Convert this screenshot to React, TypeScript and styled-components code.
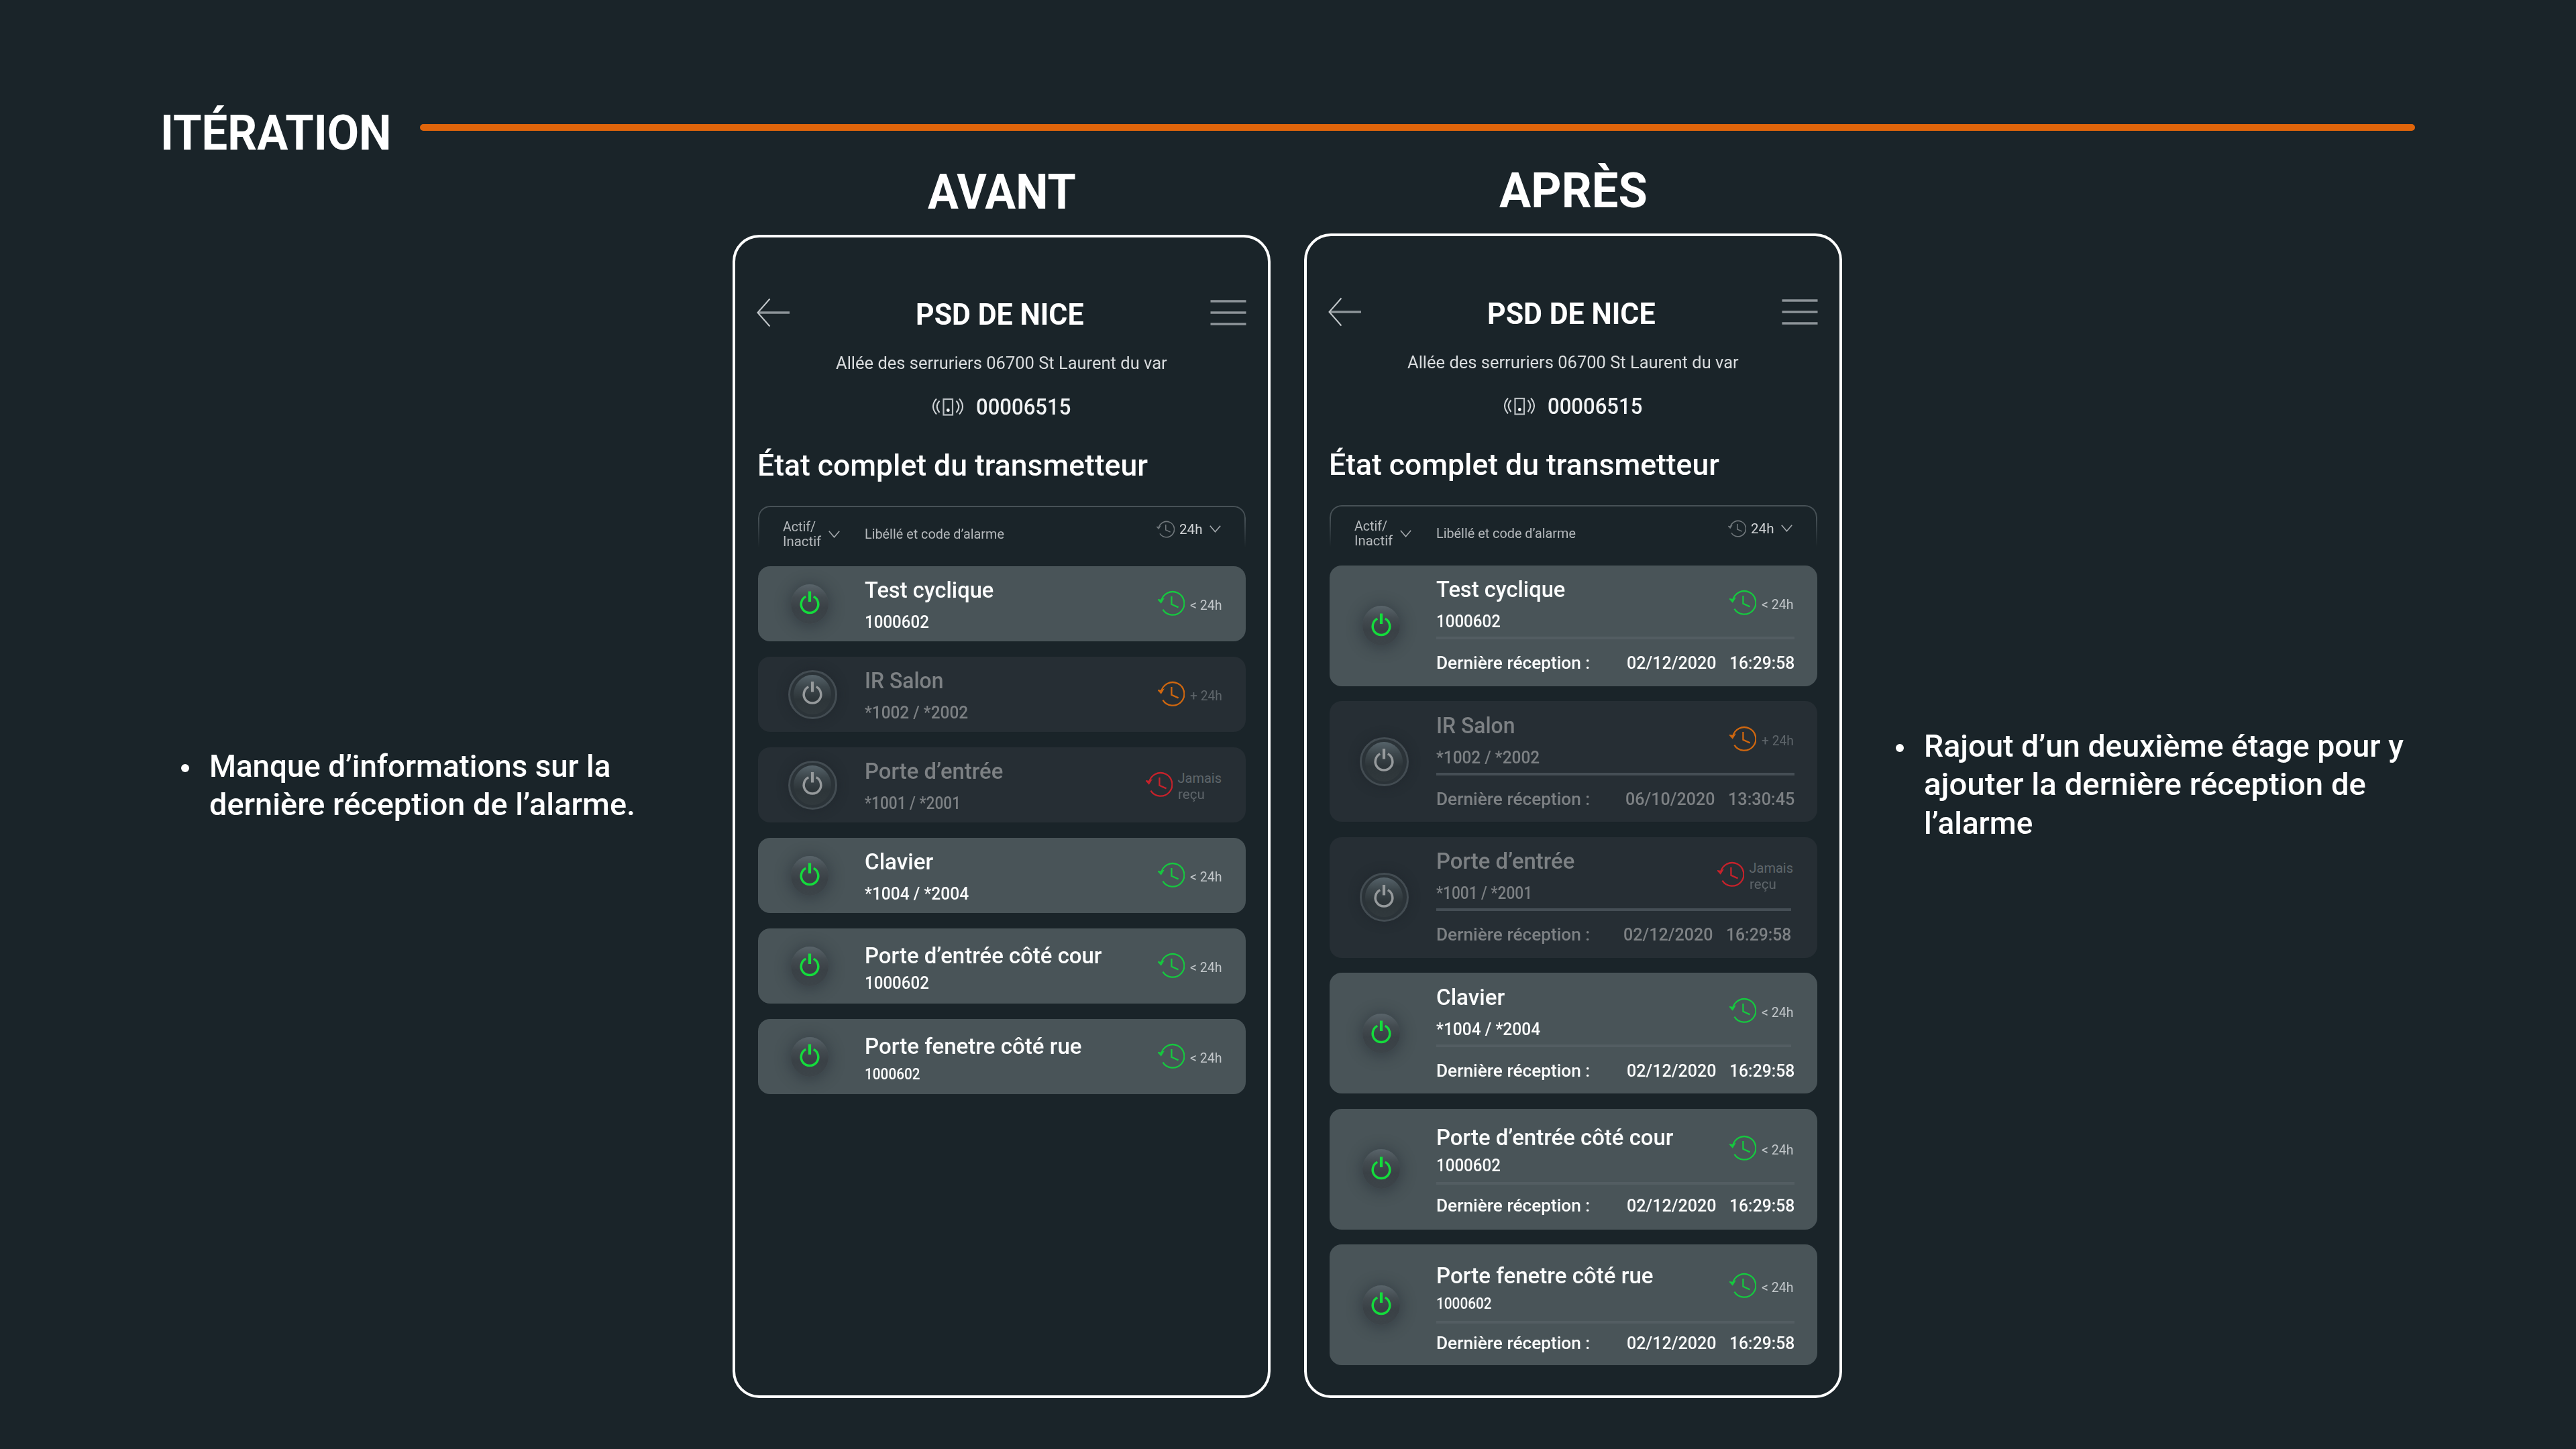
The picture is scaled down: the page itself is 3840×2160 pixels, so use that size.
import React, { useLayoutEffect, useRef, useState } from 'react';
import styled, { createGlobalStyle } from 'styled-components';

const GlobalStyle = createGlobalStyle`
    * {
        box-sizing: border-box;
    }

    body {
        margin: 0;
        background: #1a2429;
        color: #ffffff;
        font-family: 'Roboto', 'Liberation Sans', sans-serif;
    }
`

const Page = styled.div`
    width: 3840px;
    height: 2160px;
    overflow: hidden;
    background: #1a2429;
`

const Header = styled.header`
    display: flex;
    align-items: flex-start;
    justify-content: space-between;
    height: 240px;
    padding: 159px 240px 0 239px;
`

const HeaderLine = styled.div`
    width: 2974px;
    height: 10px;
    margin-top: 26px;
    border-radius: 5px;
    background: #e0650b;
`

const Heading = styled.h1`
    margin: 0;
    font-size: 72px;
    line-height: 80px;
    font-weight: 700;
`

const Columns = styled.main`
    display: grid;
    grid-template-columns: 1092px 852px 882px 1fr;
    align-items: start;
`

const Column = styled.section<{ $top: number }>`
    display: flex;
    flex-direction: column;
    align-items: center;
    width: 802px;
    padding-top: ${p => p.$top}px;
`

const Note = styled.ul<{ $top: number; $left?: number }>`
    display: flex;
    gap: 30px;
    margin: ${p => p.$top}px 0 0;
    padding: 0 0 0 ${p => p.$left || 0}px;
    list-style: none;
    font-size: 47px;
    line-height: 57.6px;
    font-weight: 500;
`

const Bullet = styled.li`
    width: 12px;
    height: 12px;
    margin-top: 26px;
    border-radius: 50%;
    background: #ffffff;
`

const NoteLines = styled.li`
    display: flex;
    flex-direction: column;
`

const Phone = styled.article<{ $pad: number; $height: number }>`
    width: 802px;
    height: ${p => p.$height}px;
    margin-top: 23px;
    padding: ${p => p.$pad}px 33.5px 0;
    border: 4px solid #ffffff;
    border-radius: 40px;
`

const TopBar = styled.div`
    display: flex;
    align-items: flex-start;
    justify-content: space-between;
    height: 54px;
    margin: 0 -1px 0 -2px;
    font-size: 45px;
    line-height: 54px;
    font-weight: 700;
`

const IconSlot = styled.div<{ $top: number }>`
    padding-top: ${p => p.$top}px;
    line-height: 0;
`

const Centered = styled.div`
    display: flex;
    justify-content: center;
`

const Address = styled(Centered)`
    margin-top: 29px;
    font-size: 25.6px;
    line-height: 32px;
    color: #d9dcde;
`

const Serial = styled.div`
    display: flex;
    align-items: center;
    justify-content: center;
    gap: 19px;
    margin-top: 30px;
    padding-right: 1px;
    font-size: 33.5px;
    line-height: 40px;
    font-weight: 500;
    color: #f1f3f4;
`

const SectionTitle = styled.h2`
    margin: 42px 0 0 -1px;
    font-size: 43.5px;
    line-height: 52px;
    font-weight: 500;
`

/* frame and labels share one cell: the fade touches the frame only */
const Filters = styled.div`
    display: grid;
    margin: 33px 0 25.5px;

    > * {
        grid-area: 1 / 1;
    }
`

const FilterFrame = styled.div`
    height: 64px;
    border: 2px solid #475156;
    border-bottom: none;
    border-radius: 18px 18px 0 0;
    mask-image: linear-gradient(#000 30%, transparent 98%);
`

const FilterContent = styled.div`
    display: flex;
    padding: 2px 37px 0;
    font-size: 20px;
    line-height: 22.4px;
    color: #b6babd;
`

const FilterState = styled.div`
    display: flex;
    gap: 11px;
    width: 122px;
    padding-top: 18px;
`

const FilterStack = styled.div`
    display: flex;
    flex-direction: column;
`

const FilterLabel = styled.div`
    flex: 1;
    padding-top: 29px;
`

const FilterTime = styled.div`
    display: flex;
    padding-top: 20px;
    color: #d0d3d5;
`

const FilterHours = styled.div`
    margin: 2px 10px 0 7px;
`

const List = styled.div<{ $gap: number }>`
    display: flex;
    flex-direction: column;
    gap: ${p => p.$gap}px;
`

const Card = styled.div<{ $active: boolean; $height: number }>`
    display: flex;
    align-items: stretch;
    height: ${p => p.$height}px;
    padding-right: 34px;
    border-radius: 18px;
    background: ${p => (p.$active ? '#495458' : '#262e34')};
    color: ${p => (p.$active ? '#fbfcfc' : '#7d8184')};
    font-weight: 500;
`

const PowerCell = styled.div<{ $active: boolean }>`
    display: flex;
    align-items: center;
    justify-content: center;
    width: ${p => (p.$active ? 155 : 163)}px;
    margin-right: ${p => (p.$active ? 4 : -4)}px;
`

const Knob = styled.div`
    display: flex;
    align-items: center;
    justify-content: center;
    width: 56px;
    height: 59px;
    border-radius: 50%;
    background: linear-gradient(#59646a 0%, #434b50 32%, #3a4146 60%, #3c4449 100%);
    box-shadow: 0 2px 20px 4px rgba(30, 36, 46, 0.38);
`

const OffRing = styled.div`
    display: flex;
    align-items: center;
    justify-content: center;
    width: 73px;
    height: 73px;
    border: 3px solid #434c52;
    border-radius: 50%;
    background: #2b3338;
    box-shadow: 0 0 14px 2px rgba(30, 35, 42, 0.5);
`

const OffKnob = styled(Knob)`
    background: linear-gradient(#56636a 0%, #3d474c 30%, #2d3539 62%, #31393d 100%);
    box-shadow: none;
`

const CardBody = styled.div`
    flex: 1;
`

const CardTop = styled.div`
    display: flex;
    justify-content: space-between;
`

const Names = styled.div<{ $pad: number }>`
    padding-top: ${p => p.$pad}px;
`

const Name = styled.div`
    font-size: 33.5px;
    line-height: 40px;
`

const Code = styled.div<{ $gap: number; $small?: boolean }>`
    margin-top: ${p => p.$gap}px;
    font-size: ${p => (p.$small ? 23.5 : 26.6)}px;
    line-height: 32px;
`

const Status = styled.div<{ $shift: number; $active: boolean }>`
    display: flex;
    align-items: center;
    gap: 8px;
    height: 38px;
    margin-top: ${p => 37.5 + p.$shift}px;
    margin-right: 1px;
    font-size: 20px;
    line-height: 24px;
    font-weight: 400;
    color: ${p => (p.$active ? '#c2c7ca' : '#5f666b')};
`

const StatusLabel = styled.div`
    display: flex;
    flex-direction: column;
    padding-top: 4px;
`

const Rule = styled.div<{ $active: boolean; $gap: number; $short?: boolean }>`
    height: 4px;
    margin: ${p => p.$gap}px ${p => (p.$short ? 5 : 0)}px 0 0;
    background: ${p => (p.$active ? '#535d62' : '#454e55')};
`

const Reception = styled.div<{ $gap: number; $short?: boolean }>`
    display: flex;
    margin-top: ${p => p.$gap}px;
    padding-right: ${p => (p.$short ? 5 : 0)}px;
    font-size: 26px;
    line-height: 32px;
`

const ReceptionLabel = styled.div`
    flex: 1;
`

const ReceptionTime = styled.div`
    margin-left: 19px;
`

const Line = styled.span<{ $width: number }>`
    display: block;
    width: ${p => p.$width}px;
    text-align: left;
    white-space: nowrap;
`

const Glyphs = styled.span`
    display: inline-block;
    transform-origin: 0 50%;
`

/* Narrows or widens one line of text so that it fills its given width */
const Fit = ({ w, children }: { w: number; children: string }) => {
    const ref = useRef<HTMLSpanElement>(null);
    const [scale, setScale] = useState(1);

    useLayoutEffect(() => {
        if (ref.current) {
            setScale(w / ref.current.offsetWidth);
        }
    }, [w, children]);

    return (
        <Line $width={w}>
            <Glyphs ref={ref} style={{ transform: `scaleX(${scale})` }}>{children}</Glyphs>
        </Line>
    )
}

const BackIcon = () => (
    <svg width="50" height="44" viewBox="0 0 50 44" fill="none">
        <path d="M2 22H49" stroke="#8d9499" strokeWidth="3.4" />
        <path d="M19.5 1.5L1.5 22L19.5 42.5" stroke="#c3c8cb" strokeWidth="2" />
    </svg>
)

const MenuIcon = () => (
    <svg width="54" height="44" viewBox="0 0 54 44" stroke="#8d9499" strokeWidth="3.4">
        <path d="M0.5 5H53.5M0.5 22H53.5M0.5 39H53.5" />
    </svg>
)

const DeviceIcon = () => (
    <svg width="46" height="28" viewBox="0 0 46 28" fill="none" stroke="#cfd3d6" strokeWidth="2">
        <rect x="16.5" y="2" width="13.5" height="23.5" strokeWidth="2.2" stroke="#b9bec2" />
        <circle cx="23.3" cy="18.5" r="2.4" fill="#ffffff" stroke="none" />
        <path d="M6 1.5C-0.5 9 -0.5 17 6 24.5" />
        <path d="M10.5 4.5C5.5 10 5.5 16 10.5 22" />
        <path d="M35.5 4.5C40.5 10 40.5 16 35.5 22" />
        <path d="M40 1.5C46.5 9 46.5 17 40 24.5" />
    </svg>
)

const Chevron = () => (
    <svg width="17" height="11" viewBox="0 0 17 11" fill="none" stroke="#a4a9ad" strokeWidth="1.6">
        <path d="M0.8 0.8L8.5 9.8L16.2 0.8" />
    </svg>
)

const HistoryIcon = ({ color, size = 40 }: { color: string; size?: number }) => (
    <svg width={size} height={size} viewBox="0 0 40 40" fill="none" stroke={color} strokeWidth="2.3">
        <path d="M5 16.5A17.3 17.3 0 1 1 7.4 28.6" />
        <path d="M0.6 14L4.7 18.4L8 13L4.6 14.6Z" fill={color} strokeWidth="1.6" />
        <path d="M20.4 9V20.7L30.6 25.4" />
    </svg>
)

const PowerIcon = ({ color, lift = 0 }: { color: string; lift?: number }) => (
    <svg width="32" height="38" viewBox={`0 ${lift} 32 38`} fill="none" stroke={color}>
        <path d="M10.3 8.8A12.8 12.8 0 1 0 21.7 8.8" strokeWidth="3.5" />
        <path d="M16 1V16.5" strokeWidth="4.2" />
    </svg>
)

const statusColors = {
    ok: '#16c83f',
    late: '#d0670f',
    never: '#c6222b',
};

const alarms = [
    { name: 'Test cyclique', nameW: 192, code: '1000602', codeW: 96, active: true, status: 'ok',
        date: '02/12/2020', time: '16:29:58' },
    { name: 'IR Salon', nameW: 117, code: '*1002 / *2002', codeW: 154, active: false, status: 'late',
        date: '06/10/2020', time: '13:30:45' },
    { name: 'Porte d’entrée', nameW: 206, code: '*1001 / *2001', codeW: 143, active: false, status: 'never',
        date: '02/12/2020', time: '16:29:58', short: true },
    { name: 'Clavier', nameW: 102, code: '*1004 / *2004', codeW: 155, active: true, status: 'ok',
        date: '02/12/2020', time: '16:29:58', shortRule: true },
    { name: 'Porte d’entrée côté cour', nameW: 354, code: '1000602', codeW: 96, active: true, status: 'ok',
        date: '02/12/2020', time: '16:29:58' },
    { name: 'Porte fenetre côté rue', nameW: 324, code: '1000602', codeW: 83, small: true, active: true, status: 'ok',
        date: '02/12/2020', time: '16:29:58' },
];

/* vertical rhythm of the rows: name padding, code gap, status shift, rule gap, footer gap */
const plainRows = [
    [16.5, 11, 0], [16.5, 11, 0], [16.5, 11, 0], [16.5, 11, 0], [21, 4, 0], [21, 5, 0],
];
const detailRows = [
    [16.5, 11, 0, 7, 19], [16.5, 11, 0, 7, 19], [16.5, 11, 0, 7, 19],
    [16.5, 11.5, 0, 6.5, 19], [23.5, 4.5, 3, 9, 15.5], [26.3, 5.4, 5.6, 9.5, 13],
];

const AlarmStatus = ({ kind, shift, active }: { kind: string; shift: number; active: boolean }) => (
    <Status $shift={shift} $active={active}>
        <HistoryIcon color={statusColors[kind]} />
        <StatusLabel>
            {kind === 'ok' && <Fit w={48}>{'< 24h'}</Fit>}
            {kind === 'late' && <Fit w={48}>+ 24h</Fit>}
            {kind === 'never' && <Fit w={66}>Jamais</Fit>}
            {kind === 'never' && <Fit w={40}>reçu</Fit>}
        </StatusLabel>
    </Status>
)

const AlarmCard = ({ alarm, row, detailed }) => {
    const [pad, gap, shift, ruleGap, footGap] = row;

    return (
        <Card $active={alarm.active} $height={detailed ? 180 : 112.6}>
            <PowerCell $active={alarm.active}>
                {
                    alarm.active
                        ? <Knob><PowerIcon color="#14dc3c" lift={0.5} /></Knob>
                        : <OffRing><OffKnob><PowerIcon color="#969a9c" lift={1} /></OffKnob></OffRing>
                }
            </PowerCell>
            <CardBody>
                <CardTop>
                    <Names $pad={pad}>
                        <Name><Fit w={alarm.nameW}>{alarm.name}</Fit></Name>
                        <Code $gap={gap} $small={alarm.small}><Fit w={alarm.codeW}>{alarm.code}</Fit></Code>
                    </Names>
                    <AlarmStatus kind={alarm.status} shift={shift} active={alarm.active} />
                </CardTop>
                {detailed &&
                    <React.Fragment>
                        <Rule $active={alarm.active} $gap={ruleGap} $short={alarm.short || alarm.shortRule} />
                        <Reception $gap={footGap} $short={alarm.short}>
                            <ReceptionLabel><Fit w={229}>Dernière réception :</Fit></ReceptionLabel>
                            <Fit w={134}>{alarm.date}</Fit>
                            <ReceptionTime><Fit w={alarm.time === '13:30:45' ? 99 : 97}>{alarm.time}</Fit></ReceptionTime>
                        </Reception>
                    </React.Fragment>
                }
            </CardBody>
        </Card>
    )
}

const TransmitterScreen = ({ detailed = false }) => (
    <Phone $pad={detailed ? 88.5 : 87.5} $height={detailed ? 1736 : 1734}>
        <TopBar>
            <IconSlot $top={2}><BackIcon /></IconSlot>
            <Fit w={251}>PSD DE NICE</Fit>
            <IconSlot $top={2}><MenuIcon /></IconSlot>
        </TopBar>
        <Address><Fit w={494}>Allée des serruriers 06700 St Laurent du var</Fit></Address>
        <Serial>
            <DeviceIcon />
            <Fit w={141}>00006515</Fit>
        </Serial>
        <SectionTitle><Fit w={582}>État complet du transmetteur</Fit></SectionTitle>
        <Filters>
            <FilterFrame />
            <FilterContent>
                <FilterState>
                    <FilterStack>
                        <Fit w={49}>Actif/</Fit>
                        <Fit w={57}>Inactif</Fit>
                    </FilterStack>
                    <IconSlot $top={17}><Chevron /></IconSlot>
                </FilterState>
                <FilterLabel><Fit w={208}>Libéllé et code d’alarme</Fit></FilterLabel>
                <FilterTime>
                    <HistoryIcon color="#70777b" size={27} />
                    <FilterHours><Fit w={35}>24h</Fit></FilterHours>
                    <IconSlot $top={7}><Chevron /></IconSlot>
                </FilterTime>
            </FilterContent>
        </Filters>
        <List $gap={detailed ? 22.5 : 22.4}>
            {alarms.map((alarm, i) => (
                <AlarmCard
                    key={alarm.name}
                    alarm={alarm}
                    row={detailed ? detailRows[i] : plainRows[i]}
                    detailed={detailed}
                />
            ))}
        </List>
    </Phone>
)

export const App = () => {
    return (
        <React.Fragment>
            <GlobalStyle />
            <Page>
                <Header>
                    <Heading><Fit w={344}>ITÉRATION</Fit></Heading>
                    <HeaderLine />
                </Header>
                <Columns>
                    <Note $top={872.5} $left={270}>
                        <Bullet />
                        <NoteLines>
                            <Fit w={598}>Manque d’informations sur la</Fit>
                            <Fit w={635}>dernière réception de l’alarme.</Fit>
                        </NoteLines>
                    </Note>
                    <Column $top={7}>
                        <Heading as="h2"><Fit w={221}>AVANT</Fit></Heading>
                        <TransmitterScreen />
                    </Column>
                    <Column $top={5}>
                        <Heading as="h2"><Fit w={221}>APRÈS</Fit></Heading>
                        <TransmitterScreen detailed />
                    </Column>
                    <Note $top={842.5}>
                        <Bullet />
                        <NoteLines>
                            <Fit w={715}>Rajout d’un deuxième étage pour y</Fit>
                            <Fit w={659}>ajouter la dernière réception de</Fit>
                            <Fit w={162}>l’alarme</Fit>
                        </NoteLines>
                    </Note>
                </Columns>
            </Page>
        </React.Fragment>
    )
}

export default App
